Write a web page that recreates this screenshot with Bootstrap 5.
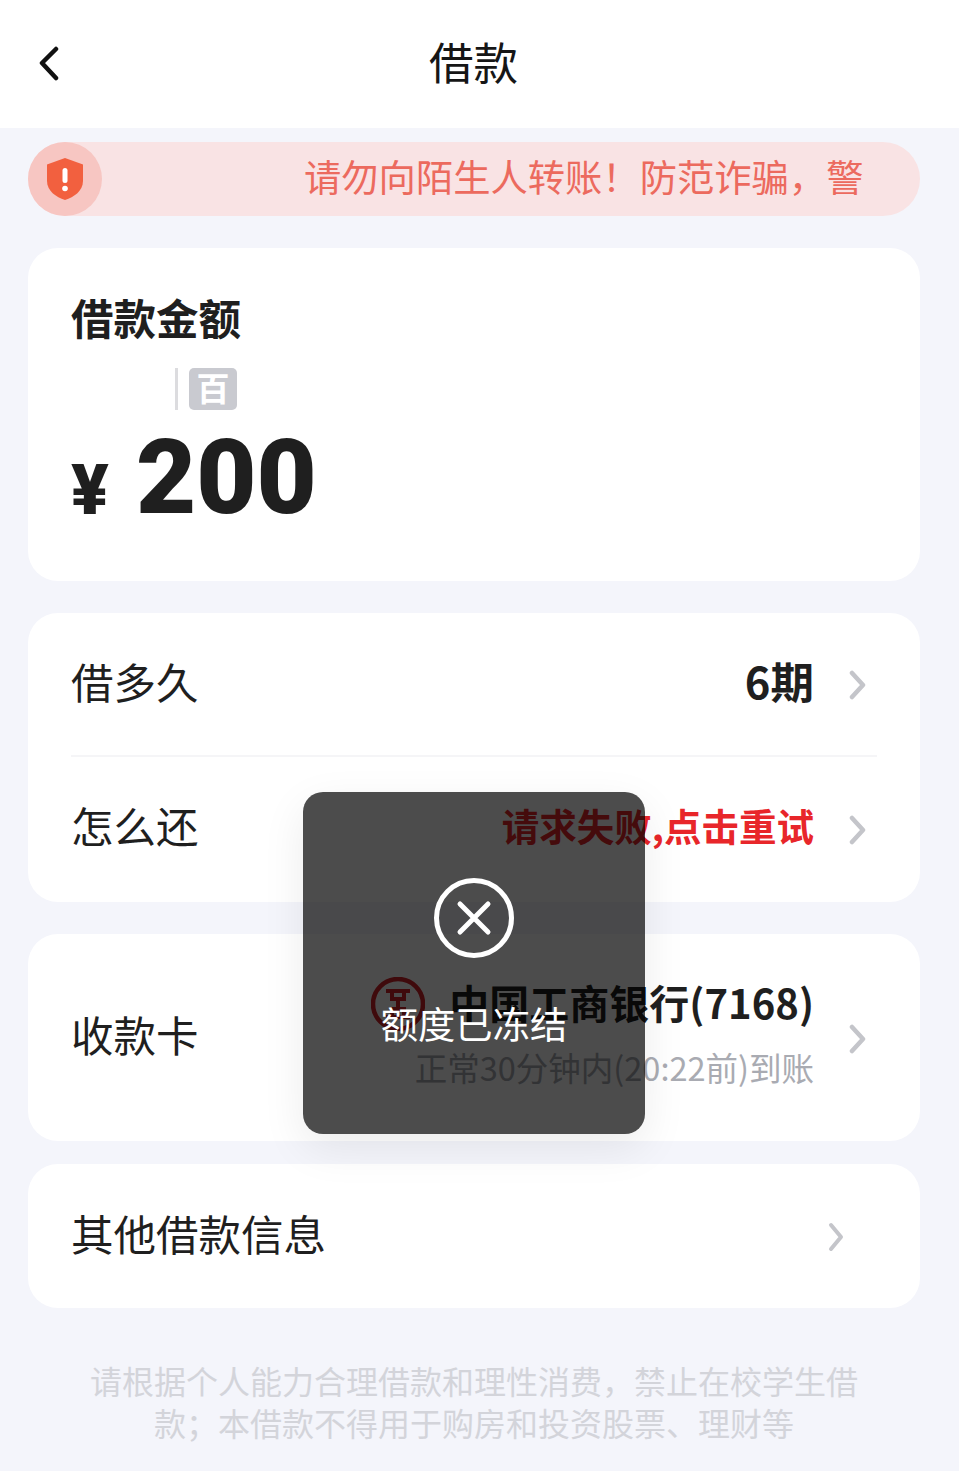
<!DOCTYPE html>
<html lang="zh-CN">
<head>
    <meta charset="UTF-8">
    <meta name="viewport" content="width=device-width, initial-scale=1.0">
    <title>借款</title>
    <link href="https://cdn.jsdelivr.net/npm/bootstrap@5.3.0/dist/css/bootstrap.min.css" rel="stylesheet">
    <style>
        body { background: #f4f5fb; font-family: "Noto Sans CJK SC", "Noto Sans", sans-serif; color: #1f1f1f; height: 1471px; overflow: hidden; position: relative; }
        .app-bar { height: 128px; background: #fff; padding-left: 38px; }
        .app-bar-title { position: absolute; left: 0; right: 0; top: 29px; text-align: center; font-size: 44.500px; line-height: 64px; padding-left: 30px; padding-right: 42px; color: #161616; }
        .notice-bar { height: 74px; margin: 14px 39px 0 28px; background: #f9e3e4; border-radius: 37px; }
        .notice-icon { width: 74px; height: 74px; border-radius: 50%; background: #f7c6c2; flex: none; }
        .notice-text { margin-left: 202px; margin-bottom: 7px; width: 560px; white-space: nowrap; overflow: hidden; font-size: 37.300px; line-height: 60px; color: #ec6a5e; }
        .loan-card { border: 0; border-radius: 30px; background: #fff; margin: 0 39px 0 28px; }
        .amount-card { height: 333px; margin-top: 32px; padding: 39px 43px 0; }
        .amount-title { font-size: 42.500px; line-height: 60px; font-weight: 700; }
        .unit-row { height: 42px; margin-top: 21px; padding-left: 104px; }
        .unit-line { width: 3px; background: #dcdcdf; }
        .unit-tag { width: 48px; background: #c9cad0; color: #fff; border-radius: 5px; font-size: 33px; font-weight: 700; line-height: 38px; text-align: center; margin-left: 11px; }
        .amount-value { height: 110px; margin-top: 13px; font-family: Roboto, sans-serif; font-weight: 900; }
        .amount-sign { font-size: 70px; line-height: 70px; margin-right: 26px; margin-bottom: 8px; width: 39px; }
        .amount-num { font-size: 104px; line-height: 110px; }
        .terms-card { height: 289px; margin-top: 32px; padding: 0 43px; }
        .loan-row { height: 142px; font-size: 42.500px; }
        .loan-row + .loan-row { border-top: 2px solid #f5f5f7; height: 145px; }
        .row-label { margin-bottom: 7px; }
        .row-value { font-weight: 700; font-size: 43.500px; margin-bottom: 7px; }
        .row-error { font-weight: 700; font-size: 37.500px; color: #e8262a; margin-bottom: 7px; }
        .row-arrow { width: 18px; margin-left: 34px; margin-right: 11px; margin-top: 2px; flex: none; }
        .bank-card { height: 207px; margin-top: 32px; padding: 0 43px; }
        .bank-info { margin-bottom: 12px; }
        .bank-name { font-size: 40px; line-height: 56px; font-weight: 700; }
        .bank-sub { font-size: 32.500px; line-height: 46px; color: #a9abb2; margin-top: 13px; }
        .bank-logo { width: 54px; height: 54px; margin-right: 24px; margin-top: 4px; }
        .other-card { height: 144px; margin-top: 23px; padding: 0 43px; }
        .other-card .row-arrow { margin-right: 33px; }
        .foot-note { margin: 51px 96px 0 85px; text-align: center; font-size: 32px; line-height: 42px; color: #d3d4da; }
        .toast-box { position: absolute; left: 303px; top: 792px; width: 342px; height: 342px; border-radius: 20px; background: rgba(0, 0, 0, .7); box-shadow: 0 14px 44px rgba(0, 0, 0, .08); color: #fff; }
        .toast-icon { width: 82px; height: 82px; margin-top: 85px; }
        .toast-text { font-size: 37.300px; line-height: 50px; margin-top: 39px; }
    </style>
</head>
<body>
    <div class="app-bar d-flex align-items-center">
        <svg width="22" height="36" viewBox="0 0 22 36" fill="none" stroke="#111" stroke-width="4.500" stroke-linecap="round" stroke-linejoin="round"><path d="M18 3 4 17l14 15"/></svg>
        <div class="app-bar-title">借款</div>
    </div>

    <div class="notice-bar d-flex align-items-center">
        <div class="notice-icon d-flex align-items-center justify-content-center">
            <svg width="38" height="44" viewBox="0 0 38 44"><path d="M19 1 37 7.500V24C37 34 28 40 19 43 10 40 1 34 1 24V7.500Z" fill="#f2603f"/><rect x="16.500" y="11" width="5" height="15" rx="2.500" fill="#fff"/><circle cx="19" cy="31.500" r="2.800" fill="#fff"/></svg>
        </div>
        <div class="notice-text">请勿向陌生人转账！防范诈骗，警</div>
    </div>

    <div class="card loan-card amount-card">
        <div class="amount-title">借款金额</div>
        <div class="unit-row d-flex">
            <div class="unit-line"></div>
            <div class="unit-tag">百</div>
        </div>
        <div class="amount-value d-flex align-items-end">
            <div class="amount-sign">¥</div>
            <div class="amount-num">200</div>
        </div>
    </div>

    <div class="card loan-card terms-card">
        <div class="loan-row d-flex align-items-center justify-content-between">
            <div class="row-label">借多久</div>
            <div class="d-flex align-items-center">
                <div class="row-value">6期</div>
                <svg class="row-arrow" height="30" viewBox="0 0 18 30" fill="none" stroke="#c4c5ca" stroke-width="4.500" stroke-linecap="round" stroke-linejoin="round"><path d="M4 3l11 12L4 27"/></svg>
            </div>
        </div>
        <div class="loan-row d-flex align-items-center justify-content-between">
            <div class="row-label">怎么还</div>
            <div class="d-flex align-items-center">
                <div class="row-error">请求失败,点击重试</div>
                <svg class="row-arrow" height="30" viewBox="0 0 18 30" fill="none" stroke="#c4c5ca" stroke-width="4.500" stroke-linecap="round" stroke-linejoin="round"><path d="M4 3l11 12L4 27"/></svg>
            </div>
        </div>
    </div>

    <div class="card loan-card bank-card">
        <div class="loan-row h-100 d-flex align-items-center justify-content-between">
            <div class="row-label">收款卡</div>
            <div class="d-flex align-items-center">
                <div class="bank-info text-end">
                    <div class="d-flex align-items-center justify-content-end">
                        <svg class="bank-logo" viewBox="0 0 54 54" fill="none" stroke="#d3232a"><circle cx="27" cy="27" r="25" stroke-width="4.500"/><path d="M15 14h24M15 40h24M21 14v8h12v-8M21 40v-8h12v8M27 22v10" stroke-width="4"/></svg>
                        <div class="bank-name">中国工商银行(7168)</div>
                    </div>
                    <div class="bank-sub">正常30分钟内(20:22前)到账</div>
                </div>
                <svg class="row-arrow" height="30" viewBox="0 0 18 30" fill="none" stroke="#c4c5ca" stroke-width="4.500" stroke-linecap="round" stroke-linejoin="round"><path d="M4 3l11 12L4 27"/></svg>
            </div>
        </div>
    </div>

    <div class="card loan-card other-card">
        <div class="loan-row h-100 d-flex align-items-center justify-content-between">
            <div class="row-label">其他借款信息</div>
            <svg class="row-arrow" height="30" viewBox="0 0 18 30" fill="none" stroke="#c4c5ca" stroke-width="4" stroke-linecap="round" stroke-linejoin="round"><path d="M5 3l10 12L5 27"/></svg>
        </div>
    </div>

    <div class="foot-note">请根据个人能力合理借款和理性消费，禁止在校学生借款；本借款不得用于购房和投资股票、理财等</div>

    <div class="toast-box d-flex flex-column align-items-center">
        <svg class="toast-icon" viewBox="0 0 82 82" fill="none" stroke="#fff" stroke-width="5" stroke-linecap="round"><circle cx="41" cy="41" r="37.500"/><path d="M27 27l28 28M55 27 27 55"/></svg>
        <div class="toast-text">额度已冻结</div>
    </div>
</body>
</html>
